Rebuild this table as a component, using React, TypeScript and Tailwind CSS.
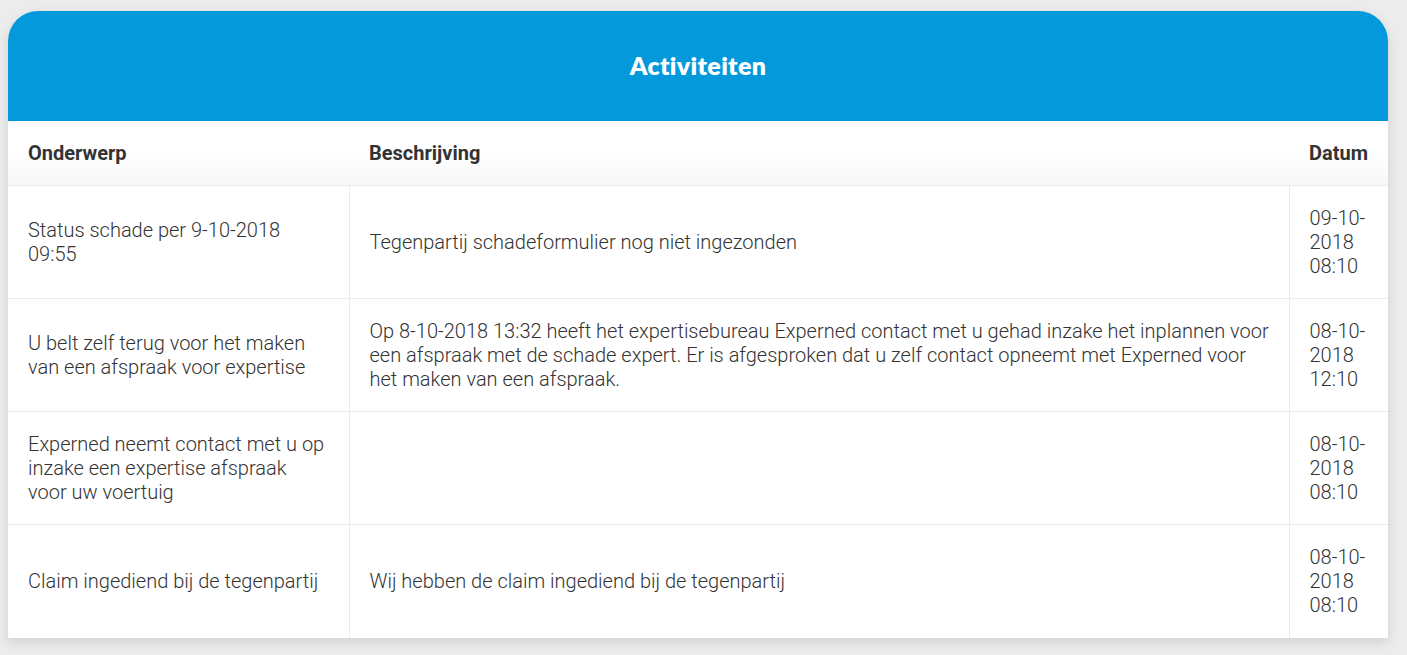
const rows = [
  {
    subject: 'Status schade per 9-10-2018 09:55',
    description: 'Tegenpartij schadeformulier nog niet ingezonden',
    date: '09-10-2018 08:10',
  },
  {
    subject: 'U belt zelf terug voor het maken van een afspraak voor expertise',
    description:
      'Op 8-10-2018 13:32 heeft het expertisebureau Experned contact met u gehad inzake het inplannen voor een afspraak met de schade expert. Er is afgesproken dat u zelf contact opneemt met Experned voor het maken van een afspraak.',
    date: '08-10-2018 12:10',
  },
  {
    subject: 'Experned neemt contact met u op inzake een expertise afspraak voor uw voertuig',
    description: '',
    date: '08-10-2018 08:10',
  },
  {
    subject: 'Claim ingediend bij de tegenpartij',
    description: 'Wij hebben de claim ingediend bij de tegenpartij',
    date: '08-10-2018 08:10',
  },
];

export default function App() {
  return (
    <div className="min-h-[655px] bg-[#ececec] pt-[11px] pl-2 pb-4 font-['Roboto',sans-serif] text-[#333]">
      <div className="w-[1380px] overflow-hidden rounded-t-[30px] bg-white shadow-[0_4px_12px_rgba(0,0,0,0.12)]">
        {/* Title bar */}
        <div className="flex h-[110px] items-center justify-center bg-[#0399db]">
          <h2 className="font-['Lato',sans-serif] text-[25px] font-extrabold tracking-[0.3px] text-white">
            Activiteiten
          </h2>
        </div>

        <table className="w-full table-fixed border-collapse text-[20px] leading-6">
          <colgroup>
            <col className="w-[341px]" />
            <col />
            <col className="w-[99px]" />
          </colgroup>
          <thead>
            <tr className="bg-gradient-to-b from-white from-50% to-[#f7f7f7]">
              <th className="px-5 py-5 text-left font-bold">Onderwerp</th>
              <th className="px-5 py-5 text-left font-bold">Beschrijving</th>
              <th className="px-5 py-5 text-left font-bold">Datum</th>
            </tr>
          </thead>
          <tbody className="font-light">
            {rows.map((row) => (
              <tr key={row.subject} className="h-[113px] border-t border-[#ebebeb]">
                <td className="px-5 py-5 align-middle">{row.subject}</td>
                <td className="border-l border-[#ebebeb] py-5 pl-5 pr-3 align-middle">
                  {row.description}
                </td>
                <td className="border-l border-[#ebebeb] py-5 pl-5 pr-2 align-middle">
                  {row.date}
                </td>
              </tr>
            ))}
          </tbody>
        </table>
      </div>
    </div>
  );
}
